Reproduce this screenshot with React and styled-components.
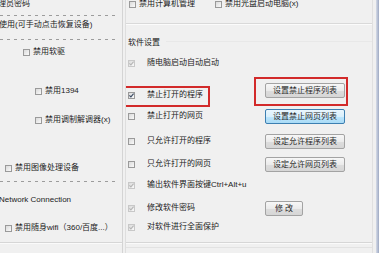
import React from 'react'
import styled, { createGlobalStyle, css } from 'styled-components'

const Global = createGlobalStyle`
  html, body { margin: 0; padding: 0; background: #f0f0f0; }
  body { font-family: "Liberation Sans", "Noto Sans CJK SC", sans-serif; }
`

const Screen = styled.div`
  width: 379px;
  height: 253px;
  overflow: hidden;
  display: flex;
  background: #f0f0f0;
  font-size: 8px;
  color: #222;
`

const LeftPane = styled.div`
  width: 122px;
  flex: none;
  display: flex;
  flex-direction: column;
  overflow: hidden;
`

const Divider = styled.div`
  width: 4px;
  flex: none;
  box-sizing: border-box;
  border-left: 1px solid #d4d4d4;
  border-right: 1px solid #dedede;
`

const RightPane = styled.div`
  width: 247px;
  flex: none;
  display: flex;
  flex-direction: column;
  box-sizing: border-box;
  border-right: 1px solid #e0e0e0;
  overflow: hidden;
`

const Frame = styled.div`
  width: 3px;
  margin-left: 3px;
  flex: none;
  background: linear-gradient(to right, #d5dbe8, #9ea9c2);
`

const Item = styled.div`
  display: flex;
  align-items: center;
  gap: 3px;
  height: 10px;
  line-height: 10px;
  white-space: nowrap;
  margin-top: ${p => p.$mt || 0}px;
  padding-left: ${p => Math.max(p.$indent || 0, 0)}px;
  margin-left: ${p => Math.min(p.$indent || 0, 0)}px;
`

const Dashed = styled.div`
  height: 1px;
  width: 118px;
  flex: none;
  margin-top: ${p => p.$mt}px;
  background: repeating-linear-gradient(to right, #9c9c9c 0 3px, transparent 3px 7px);
`

const Groove = styled.div`
  height: 1px;
  flex: none;
  margin-top: ${p => p.$mt || 0}px;
  background: #d9d9d9;
  border-bottom: 1px solid #fbfbfb;
`

const Box = styled.span`
  width: 7px;
  height: 7px;
  flex: none;
  box-sizing: border-box;
  display: flex;
  align-items: center;
  justify-content: center;
  border: 1px solid ${p => (p.$dim ? '#c8c8c8' : '#9a9a9a')};
  background: linear-gradient(135deg, #dadada, #fafafa);
`

function Check({ on, dim }) {
  return (
    <Box $dim={dim}>
      {on && (
        <svg width="5" height="5" viewBox="0 0 5 5">
          <polyline points="0.4,2.4 1.9,3.9 4.6,0.6" fill="none"
            stroke={dim ? '#b5b5b5' : '#3a4a63'} strokeWidth="1.1" />
        </svg>
      )}
    </Box>
  )
}

const TopRow = styled.div`
  display: grid;
  grid-template-columns: 86px auto;
  align-items: center;
  height: 10px;
  margin-top: -1px;
  padding-left: 3px;
  white-space: nowrap;
`

const Pair = styled.span`
  display: flex;
  align-items: center;
  gap: ${p => p.$gap ?? 3}px;
  white-space: nowrap;
  width: max-content;
  position: relative;
  line-height: 10px;
  ${p => p.$marked && css`
    &::after {
      content: '';
      position: absolute;
      left: -11px; right: -7px; top: -4px; bottom: -7px;
      border: 2px solid #d22a2a;
    }
  `}
`

const Title = styled.div`
  display: flex;
  align-items: center;
  gap: 6px;
  height: 10px;
  margin-top: 11px;
  padding-left: 2px;
  &::after {
    content: '';
    flex: 1;
    height: 1px;
    background: #e8e8e8;
  }
`

const Row = styled.div`
  display: grid;
  grid-template-columns: 137px auto;
  align-items: center;
  height: 16px;
  margin-top: ${p => p.$mt}px;
  padding-left: 2px;
`

const Button = styled.button`
  height: 15px;
  width: ${p => p.$w || 80}px;
  padding: 0;
  font: inherit;
  font-size: 8px;
  line-height: 13px;
  color: #2a2a2a;
  border: 1px solid ${p => (p.$hot ? '#3c7fb1' : '#a3a3a3')};
  border-radius: 2px;
  position: relative;
  white-space: pre;
  background: ${p => (p.$hot
    ? 'linear-gradient(#eaf6fd, #d9f0fc 50%, #bee6fd 51%, #a9dbf6)'
    : 'linear-gradient(#f7f7f7, #ebebeb 50%, #dddddd 51%, #d6d6d6)')};
  ${p => p.$raise && css`margin-bottom: 9px;`}
  ${p => p.$marked && css`
    &::after {
      content: '';
      position: absolute;
      left: -12px; right: -4px; top: -7px; bottom: -9px;
      border: 2px solid #d22a2a;
    }
  `}
`

const Footer = styled.div`
  margin-top: ${p => p.$mt}px;
  height: 1px;
  flex: none;
  background: #d6d6d6;
  border-bottom: 1px solid #fafafa;
`

const FooterInner = styled.div`
  margin-top: 3px;
  height: 1px;
  flex: none;
  background: #e2e2e2;
`

const rules = [
  { label: '随电脑启动自动启动', on: true, dim: true, mt: 9 },
  { label: '禁止打开的程序', on: true, mt: 12, marked: true, btn: '设置禁止程序列表', raise: true, btnMarked: true },
  { label: '禁止打开的网页', mt: 9, btn: '设置禁止网页列表', hot: true },
  { label: '只允许打开的程序', mt: 9, btn: '设定允许程序列表' },
  { label: '只允许打开的网页', mt: 7, btn: '设定允许网页列表' },
  { label: '输出软件界面按键Ctrl+Alt+u', on: true, dim: true, mt: 5 },
  { label: '修改软件密码', on: true, dim: true, mt: 7, btn: '修 改', w: 38 },
  { label: '对软件进行全面保护', on: true, dim: true, mt: 3 },
]

export default function App() {
  return (
    <Screen>
      <Global />
      <LeftPane>
        <Item $mt={-1} $indent={-10}>管理员密码</Item>
        <Dashed $mt={6} />
        <Item $mt={4} $indent={-1}>使用(可手动点击恢复设备)</Item>
        <Dashed $mt={9} />
        <Item $mt={7} $indent={23}><Check />禁用软驱</Item>
        <Item $mt={29} $indent={35}><Check />禁用1394</Item>
        <Item $mt={19} $indent={35}><Check />禁用调制解调器(x)</Item>
        <Item $mt={38} $indent={5}><Check />禁用图像处理设备</Item>
        <Dashed $mt={8} />
        <Item $mt={13} $indent={-1}>Network Connection</Item>
        <Item $mt={18} $indent={5}><Check />禁用随身wifi（360/百度...）</Item>
        <Footer $mt={9} />
      </LeftPane>
      <Divider />
      <RightPane>
        <TopRow>
          <Pair><Check />禁用计算机管理</Pair>
          <Pair><Check />禁用光盘启动电脑(x)</Pair>
        </TopRow>
        <Groove $mt={14} />
        <Title>软件设置</Title>
        {rules.map(r => (
          <Row key={r.label} $mt={r.mt}>
            <Pair $gap={12} $marked={r.marked}>
              <Check on={r.on} dim={r.dim} />
              {r.label}
            </Pair>
            {r.btn && (
              <Button $w={r.w} $hot={r.hot} $raise={r.raise} $marked={r.btnMarked}>
                {r.btn}
              </Button>
            )}
          </Row>
        ))}
        <Footer $mt={7} />
        <FooterInner />
      </RightPane>
      <Frame />
    </Screen>
  )
}
